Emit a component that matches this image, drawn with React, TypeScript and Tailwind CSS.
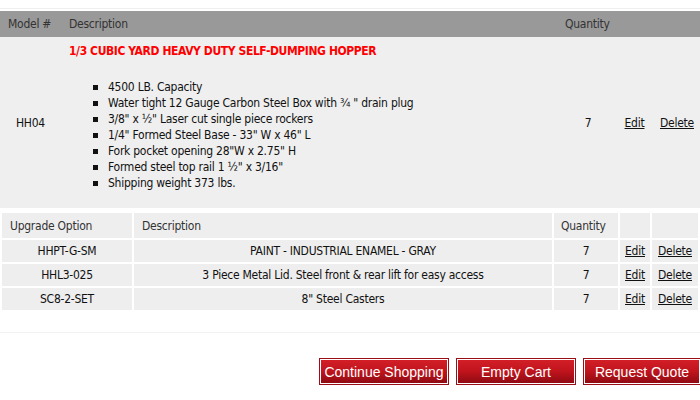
import React from "react";

const features = [
  "4500 LB. Capacity",
  "Water tight 12 Gauge Carbon Steel Box with ¾ \" drain plug",
  "3/8\" x ½\" Laser cut single piece rockers",
  "1/4\" Formed Steel Base - 33\" W x 46\" L",
  "Fork pocket opening 28\"W x 2.75\" H",
  "Formed steel top rail 1 ½\" x 3/16\"",
  "Shipping weight 373 lbs.",
];

const upgrades = [
  { code: "HHPT-G-SM", desc: "PAINT - INDUSTRIAL ENAMEL - GRAY", qty: 7 },
  { code: "HHL3-025", desc: "3 Piece Metal Lid. Steel front & rear lift for easy access", qty: 7 },
  { code: "SC8-2-SET", desc: "8\" Steel Casters", qty: 7 },
];

function CartButton({ label, width }: { label: string; width: string }) {
  return (
    <button
      className={`${width} h-[27px] shrink-0 border border-[#9a0f17] shadow-[inset_0_0_0_1px_#ffffff] bg-gradient-to-b from-[#d41f28] via-[#c0141d] to-[#8c0a12] text-white text-[14px] tracking-normal font-['Liberation_Sans',Arial,sans-serif]`}
    >
      {label}
    </button>
  );
}

export default function App() {
  return (
    <div className="w-[700px] h-[400px] bg-white overflow-hidden text-[12px] leading-[16px] tracking-[-0.25px] text-[#111] font-['DejaVu_Sans_Condensed',Tahoma,sans-serif]">
      <div className="h-[8px]" />
      <div className="h-px bg-[#efefef]" />
      <div className="h-[2px]" />

      <table className="w-full border-collapse">
        <thead>
          <tr className="h-[26px] bg-[#999999] text-[#333] text-left">
            <th className="w-[61px] pl-[8px] font-normal">Model #</th>
            <th className="pl-[8px] font-normal">Description</th>
            <th className="w-[60px] pl-[8px] font-normal">Quantity</th>
            <th className="w-[35px]" />
            <th className="w-[48px]" />
          </tr>
        </thead>
        <tbody>
          <tr className="h-[171px] bg-[#efefef]">
            <td className="text-center align-middle">HH04</td>
            <td className="align-top pl-[8px] pt-[6px]">
              <div className="font-bold text-[#f00] tracking-[-0.4px]">1/3 CUBIC YARD HEAVY DUTY SELF-DUMPING HOPPER</div>
              <ul className="mt-[20px]">
                {features.map((f) => (
                  <li key={f} className="flex items-center h-[16px] pl-[24px]">
                    <span className="w-[5px] h-[5px] bg-[#111] shrink-0" />
                    <span className="ml-[10px] whitespace-nowrap">{f}</span>
                  </li>
                ))}
              </ul>
            </td>
            <td className="text-center align-middle pl-[2px]">7</td>
            <td className="text-center align-middle">
              <a className="underline">Edit</a>
            </td>
            <td className="text-left align-middle pl-[8px]">
              <a className="underline">Delete</a>
            </td>
          </tr>
        </tbody>
      </table>

      <table className="w-full mt-[3px] border-separate border-spacing-[2px]">
        <thead>
          <tr className="h-[25px] text-[#333] text-left">
            <th className="w-[130px] pl-[8px] font-normal bg-[#eeeeee]">Upgrade Option</th>
            <th className="pl-[8px] font-normal bg-[#eeeeee]">Description</th>
            <th className="w-[64px] pl-[7px] font-normal bg-[#eeeeee]">Quantity</th>
            <th className="w-[30px] bg-[#eeeeee]" />
            <th className="w-[46px] bg-[#eeeeee]" />
          </tr>
        </thead>
        <tbody>
          {upgrades.map((u) => (
            <tr key={u.code} className="h-[22px]">
              <td className="bg-[#eeeeee] text-center">{u.code}</td>
              <td className="bg-[#eeeeee] text-center">{u.desc}</td>
              <td className="bg-[#eeeeee] text-center">{u.qty}</td>
              <td className="bg-[#eeeeee] text-center">
                <a className="underline">Edit</a>
              </td>
              <td className="bg-[#eeeeee] text-center">
                <a className="underline">Delete</a>
              </td>
            </tr>
          ))}
        </tbody>
      </table>

      <div className="h-[20px]" />
      <div className="h-px bg-[#f2f2f2]" />

      <div className="flex justify-end gap-[7px] mt-[25px] mr-[-1px]">
        <CartButton label="Continue Shopping" width="w-[130px]" />
        <CartButton label="Empty Cart" width="w-[120px]" />
        <CartButton label="Request Quote" width="w-[118px]" />
      </div>
    </div>
  );
}
